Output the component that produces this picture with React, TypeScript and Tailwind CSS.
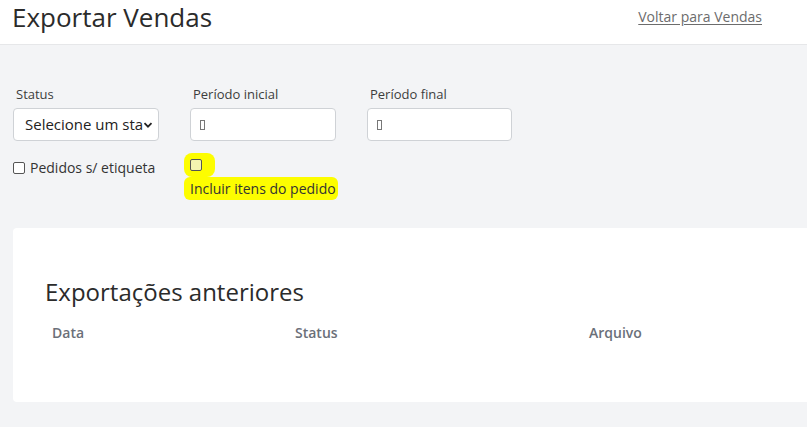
import React from "react";

export default function App() {
  const font = { fontFamily: '"Open Sans", "Liberation Sans", sans-serif' };
  return (
    <div style={font} className="w-[807px] h-[427px] overflow-hidden bg-[#f3f4f6] text-[#212529]">
      <header className="h-[45px] bg-white border-b border-[#e6e7e9] flex justify-between">
        <h1 className="ml-[12px] mt-[1px] text-[26px] leading-[32px] text-[#2b2b2b]">Exportar Vendas</h1>
        <a href="#" className="mr-[45px] mt-[7px] text-[14px] leading-[20px] text-[#6c6c6c] underline underline-offset-2">
          Voltar para Vendas
        </a>
      </header>

      <div className="pl-[13px] pt-[40px]">
        <div className="flex gap-[31px]">
          <div className="flex flex-col w-[146px]">
            <label className="pl-[3px] text-[13px] leading-[18px] text-[#3d3d3d] mb-[5px]">Status</label>
            <div className="h-[33px] bg-white border border-[#cfd2d6] rounded-[4px] flex items-center justify-between pl-[11px] pr-[5px] overflow-hidden">
              <span className="text-[15px] text-[#222] whitespace-nowrap overflow-hidden w-[118px]">Selecione um status</span>
              <svg width="10" height="10" viewBox="0 0 10 10" className="shrink-0">
                <path d="M1.5 3.2 L5 6.7 L8.5 3.2" fill="none" stroke="#222" strokeWidth="1.8" />
              </svg>
            </div>
          </div>
          <div className="flex flex-col w-[146px]">
            <label className="pl-[3px] text-[13px] leading-[18px] text-[#3d3d3d] mb-[5px]">Período inicial</label>
            <div className="h-[33px] bg-white border border-[#cfd2d6] rounded-[4px] flex items-center pl-[9px]">
              <span className="w-[5px] h-[10px] border border-[#777]" />
            </div>
          </div>
          <div className="flex flex-col w-[145px]">
            <label className="pl-[3px] text-[13px] leading-[18px] text-[#3d3d3d] mb-[5px]">Período final</label>
            <div className="h-[33px] bg-white border border-[#cfd2d6] rounded-[4px] flex items-center pl-[9px]">
              <span className="w-[5px] h-[10px] border border-[#777]" />
            </div>
          </div>
        </div>

        <div className="flex mt-[20px]">
          <div className="w-[177px] flex items-center h-[14px]">
            <span className="w-[12px] h-[12px] border border-[#555] rounded-[2px] bg-white" />
            <span className="ml-[5px] text-[14px] leading-[18px] text-[#333]">Pedidos s/ etiqueta</span>
          </div>
          <div className="flex flex-col -mt-[8px]">
            <span className="bg-[#fdfd00] rounded-[8px] w-[31px] h-[24px] -ml-[6px] flex items-center pl-[6px]">
              <span className="w-[12px] h-[12px] border border-[#555] rounded-[2px] bg-[#f3f4b0]" />
            </span>
            <span className="bg-[#fdfd00] rounded-[6px] -ml-[6px] pl-[6px] pr-[2px] text-[14px] leading-[23px] text-[#333] w-fit">
              Incluir itens do pedido
            </span>
          </div>
        </div>
      </div>

      <div className="mt-[28px] ml-[13px] w-[820px] h-[174px] bg-white rounded-[4px] pt-[48px]">
        <h2 className="ml-[32px] text-[24px] leading-[32px] text-[#2b2b2b]">Exportações anteriores</h2>
        <div className="ml-[39px] mt-[15px] grid grid-cols-[243px_294px_1fr] text-[14px] leading-[20px] font-semibold text-[#6b7079]">
          <span>Data</span>
          <span>Status</span>
          <span>Arquivo</span>
        </div>
      </div>
    </div>
  );
}
